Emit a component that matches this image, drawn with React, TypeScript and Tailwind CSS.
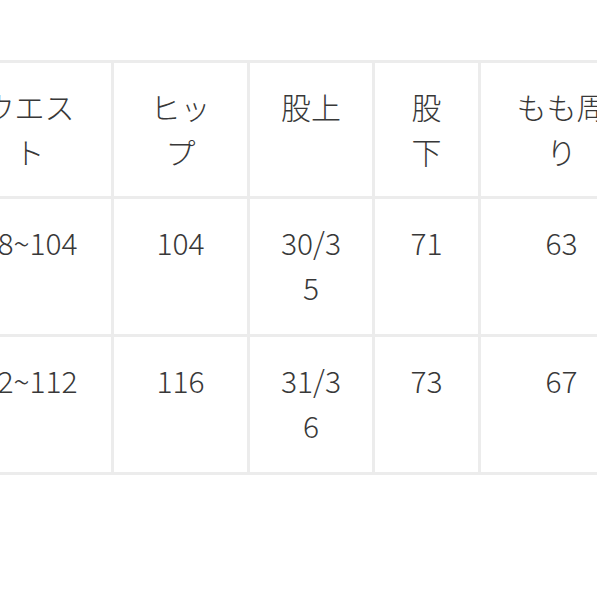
import React from 'react';

const header = ['ウエスト', 'ヒップ', '股上', '股下', 'もも周り'];
const rows = [
  ['88~104', '104', '30/35', '71', '63'],
  ['92~112', '116', '31/36', '73', '67'],
];

const widths = ['w-[166px]', 'w-[136px]', 'w-[125px]', 'w-[106px]', 'w-[164px]'];

const cell =
  'border-[3px] border-[#ececec] px-[26px] pt-[21px] pb-[20px] align-top text-center break-all font-light';

const App: React.FC = () => {
  return (
    <div
      className="w-[597px] h-[597px] overflow-hidden bg-white text-[#383838] text-[30px] leading-[45px]"
      style={{ fontFamily: '"Noto Sans CJK JP", "Noto Sans", sans-serif' }}
    >
      {/* サイズ表（左右がはみ出している） */}
      <table className="table-fixed border-collapse mt-[60px] -ml-[55px] w-[697px]">
        <colgroup>
          {widths.map((w, i) => (
            <col key={i} className={w} />
          ))}
        </colgroup>
        <thead>
          <tr className="h-[136px]">
            {header.map((h) => (
              <th key={h} className={cell}>
                {h}
              </th>
            ))}
          </tr>
        </thead>
        <tbody>
          {rows.map((r, i) => (
            <tr key={i} className="h-[138px]">
              {r.map((v, j) => (
                <td key={j} className={cell}>
                  {v}
                </td>
              ))}
            </tr>
          ))}
        </tbody>
      </table>
    </div>
  );
};

export default App;
